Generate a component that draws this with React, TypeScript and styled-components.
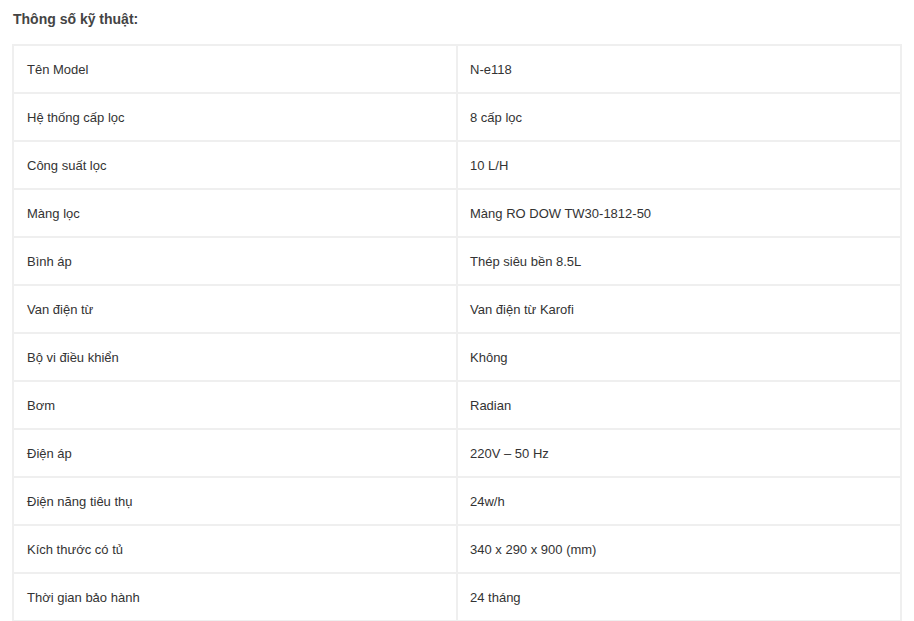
import React, { FC } from 'react';
import styled, { createGlobalStyle } from 'styled-components';

const GlobalStyle = createGlobalStyle`
  body {
    margin: 0;
    background: #fff;
    font-family: Arial, "Liberation Sans", sans-serif;
  }
`;

const Page = styled.div`
  padding: 9px 12px 0 12px;
`;

const Title = styled.h3`
  margin: 0 0 15px 1px;
  font-size: 14px;
  line-height: 20px;
  font-weight: bold;
  color: #444;
`;

const SpecTable = styled.div`
  display: grid;
  grid-template-columns: 1fr 1fr;
  width: 888px;
  border-top: 2px solid #efefef;
  border-left: 2px solid #efefef;
`;

const Cell = styled.div<{ $value?: boolean }>`
  display: flex;
  align-items: center;
  height: 46px;
  padding-left: ${(p) => (p.$value ? '12px' : '13px')};
  border-right: 2px solid #efefef;
  border-bottom: 2px solid #efefef;
  font-size: 13px;
  color: #333;
`;

const specs: [string, string][] = [
  ['Tên Model', 'N-e118'],
  ['Hệ thống cấp lọc', '8 cấp lọc'],
  ['Công suất lọc', '10 L/H'],
  ['Màng lọc', 'Màng RO DOW TW30-1812-50'],
  ['Bình áp', 'Thép siêu bền 8.5L'],
  ['Van điện từ', 'Van điện từ Karofi'],
  ['Bộ vi điều khiển', 'Không'],
  ['Bơm', 'Radian'],
  ['Điện áp', '220V – 50 Hz'],
  ['Điện năng tiêu thụ', '24w/h'],
  ['Kích thước có tủ', '340 x 290 x 900 (mm)'],
  ['Thời gian bảo hành', '24 tháng'],
];

const App: FC = () => {
  return (
    <Page>
      <GlobalStyle />
      <Title>Thông số kỹ thuật:</Title>
      <SpecTable>
        {specs.map(([label, value]) => (
          <React.Fragment key={label}>
            <Cell>{label}</Cell>
            <Cell $value>{value}</Cell>
          </React.Fragment>
        ))}
      </SpecTable>
    </Page>
  );
};

export default App;
